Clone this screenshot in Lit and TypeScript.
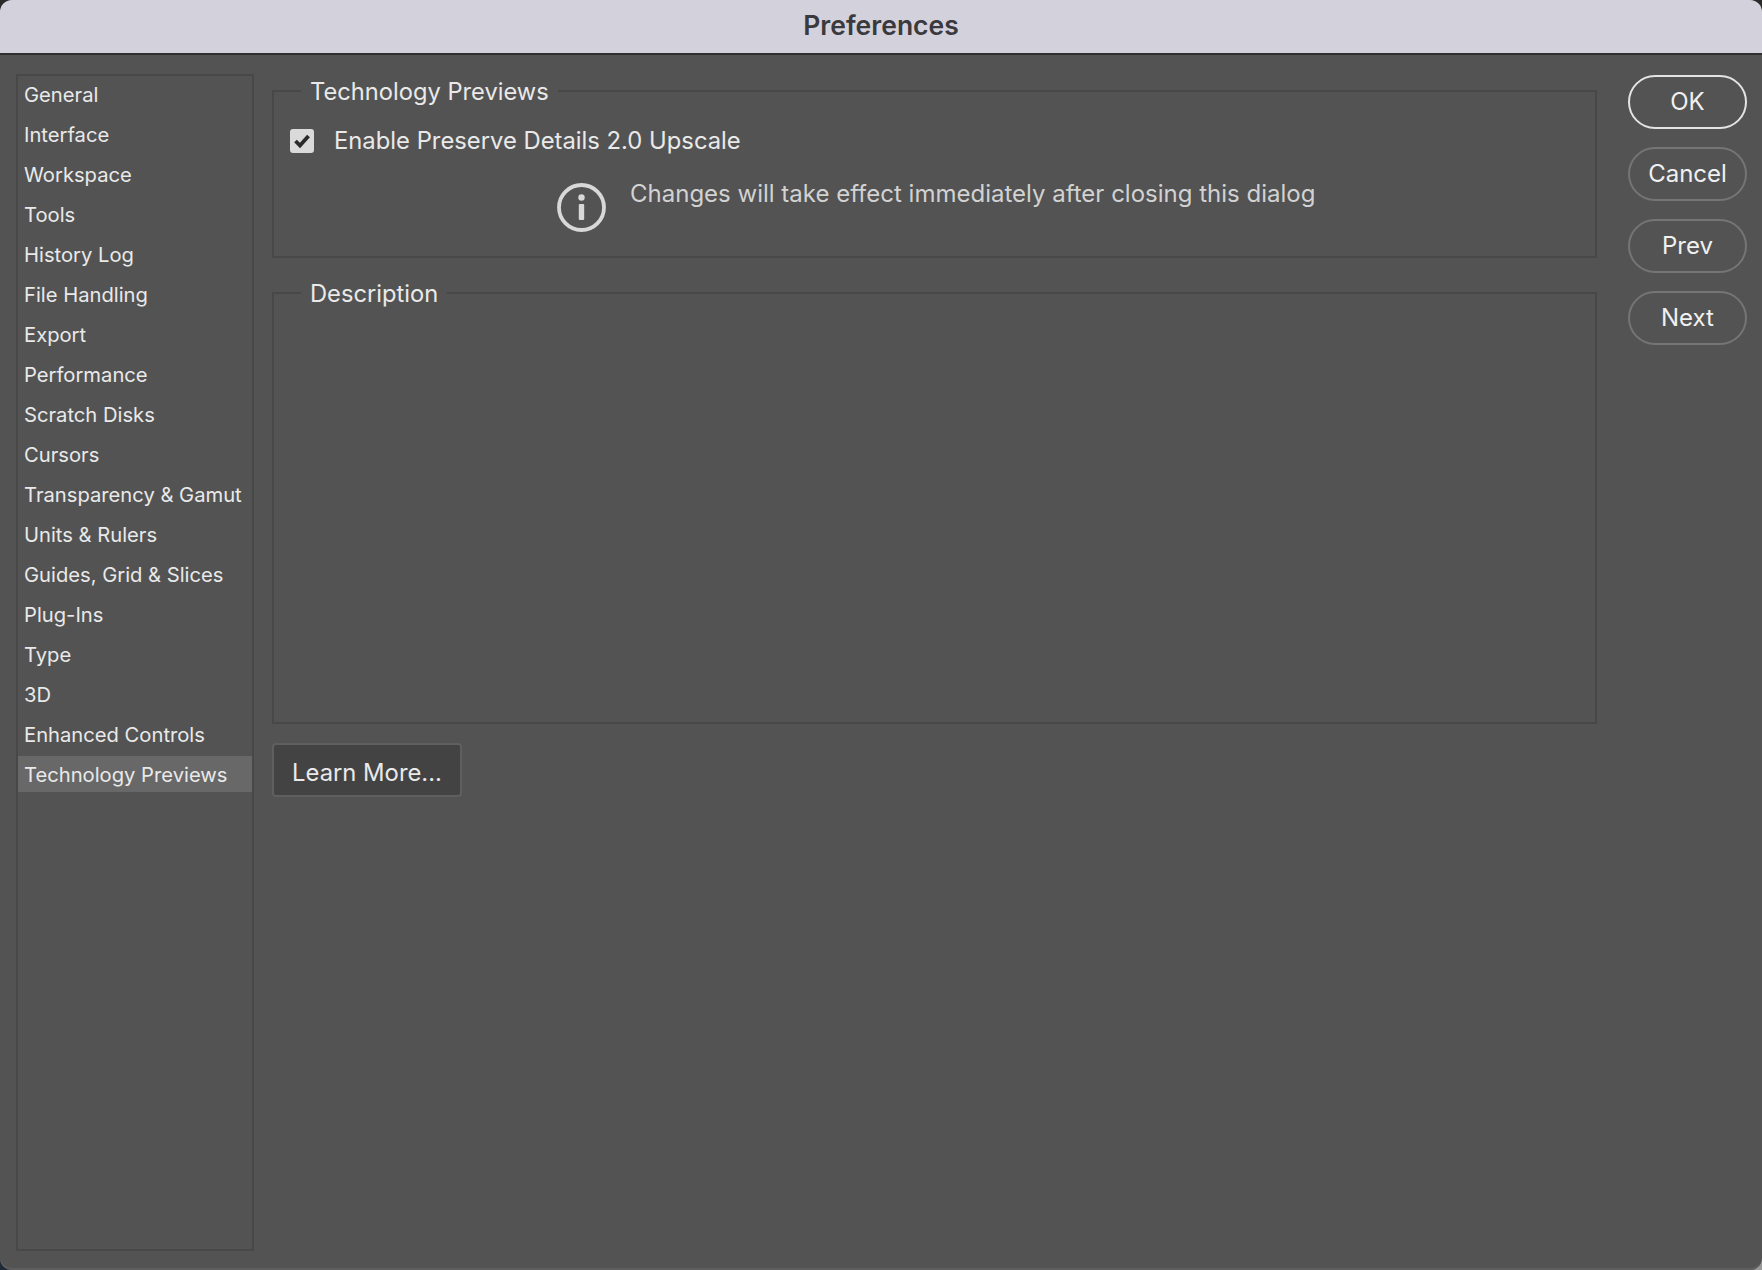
import { LitElement, html, css } from "lit";
import { customElement } from "lit/decorators.js";

const ITEMS = ["General","Interface","Workspace","Tools","History Log","File Handling","Export","Performance","Scratch Disks","Cursors","Transparency & Gamut","Units & Rulers","Guides, Grid & Slices","Plug-Ins","Type","3D","Enhanced Controls","Technology Previews"];
const BUTTONS = ["OK","Cancel","Prev","Next"];

@customElement("app-root")
export class AppRoot extends LitElement {
  static styles = css`
    :host { display:block; width:1762px; height:1270px; background:conic-gradient(#2a2a2a 0 25%, #9a9a9a 25% 50%, #1e2a38 50% 75%, #2a2a2a 75%); font-family:Inter,"Liberation Sans",sans-serif; color:#e9e9e9; overflow:hidden; }
    .window { height:100%; display:flex; flex-direction:column; background:#535353; border-radius:12px; overflow:hidden; box-shadow:inset 0 -2px 0 #5e5e5e; }
    .title { flex:none; height:55px; box-sizing:border-box; background:#d3d2dc; border-bottom:2px solid #2f2f2f; display:flex; align-items:center; justify-content:center; font-size:26.5px; font-weight:600; color:#3a3a3e; padding-bottom:4px; }
    .main { flex:1; min-height:0; display:flex; padding:19px 15px 19px 16px; }
    .sidebar { flex:none; width:238px; box-sizing:border-box; border:2px solid #484848; display:flex; flex-direction:column; gap:4px; }
    .item { height:36px; flex:none; box-sizing:border-box; display:flex; align-items:center; padding:0 0 0 6px; font-size:20.2px; white-space:nowrap; }
    .item.sel { background:#686868; }
    .content { flex:none; width:1325px; margin-left:18px; display:flex; flex-direction:column; align-items:flex-start; }
    fieldset { margin:0; width:100%; box-sizing:border-box; border:2px solid #484848; padding:0 0 0 16px; min-width:0; }
    legend { height:34px; box-sizing:border-box; display:flex; align-items:center; margin-left:11px; padding:1px 9px 0; font-size:23.7px; white-space:nowrap; }
    .tech { height:184px; }
    .desc { height:448px; margin-top:18px; }
    .check { display:flex; align-items:center; gap:20px; height:29px; margin-top:18px; font-size:23.8px; }
    .check .label { padding-top:1px; line-height:28px; }
    .box { width:24px; height:24px; flex:none; border-radius:3px; background:#dadada; display:flex; align-items:center; justify-content:center; }
    .box svg { display:block; }
    .info { display:flex; align-items:flex-start; gap:24px; margin:28px 0 0 267px; font-size:24px; color:#d2d2d2; }
    .info svg { flex:none; display:block; }
    .info span { line-height:22px; }
    .learn { height:54px; width:190px; margin-top:19px; box-sizing:border-box; background:#434343; border:2px solid #5f5f5f; border-radius:4px; color:inherit; font:inherit; font-size:23.8px; padding:4px 0 0; }
    .actions { flex:none; width:119px; margin-left:31px; margin-top:1px; display:flex; flex-direction:column; gap:18px; }
    .btn { height:54px; box-sizing:border-box; border:2px solid #757575; border-radius:27px; display:flex; align-items:center; justify-content:center; font-size:24px; color:#f0f0f0; padding-bottom:2px; }
    .btn.primary { border-color:#e4e4e4; }
  `;
  render() {
    return html`<div class="window">
      <div class="title">Preferences</div>
      <div class="main">
        <div class="sidebar">
          ${ITEMS.map((t,i)=>html`<div class="item ${i===ITEMS.length-1?"sel":""}">${t}</div>`)}
        </div>
        <div class="content">
          <fieldset class="tech">
            <legend>Technology Previews</legend>
            <div class="check">
              <span class="box"><svg width="20" height="20" viewBox="0 0 20 20"><path d="M3.5 10l4.5 4.5 8.5-9.5" fill="none" stroke="#2a2a2a" stroke-width="3.8"/></svg></span>
              <span class="label">Enable Preserve Details 2.0 Upscale</span>
            </div>
            <div class="info">
              <svg width="49" height="49" viewBox="0 0 49 49"><circle cx="24.5" cy="24.5" r="22.5" fill="none" stroke="#d8d8d8" stroke-width="3.8"/><circle cx="24.5" cy="14.5" r="3.2" fill="#d8d8d8"/><rect x="21.8" y="21" width="5.4" height="16" rx="1" fill="#d8d8d8"/></svg>
              <span>Changes will take effect immediately after closing this dialog</span>
            </div>
          </fieldset>
          <fieldset class="desc"><legend>Description</legend></fieldset>
          <button class="learn">Learn More...</button>
        </div>
        <div class="actions">
          ${BUTTONS.map((b,i)=>html`<div class="btn ${i===0?"primary":""}">${b}</div>`)}
        </div>
      </div>
    </div>`;
  }
}
